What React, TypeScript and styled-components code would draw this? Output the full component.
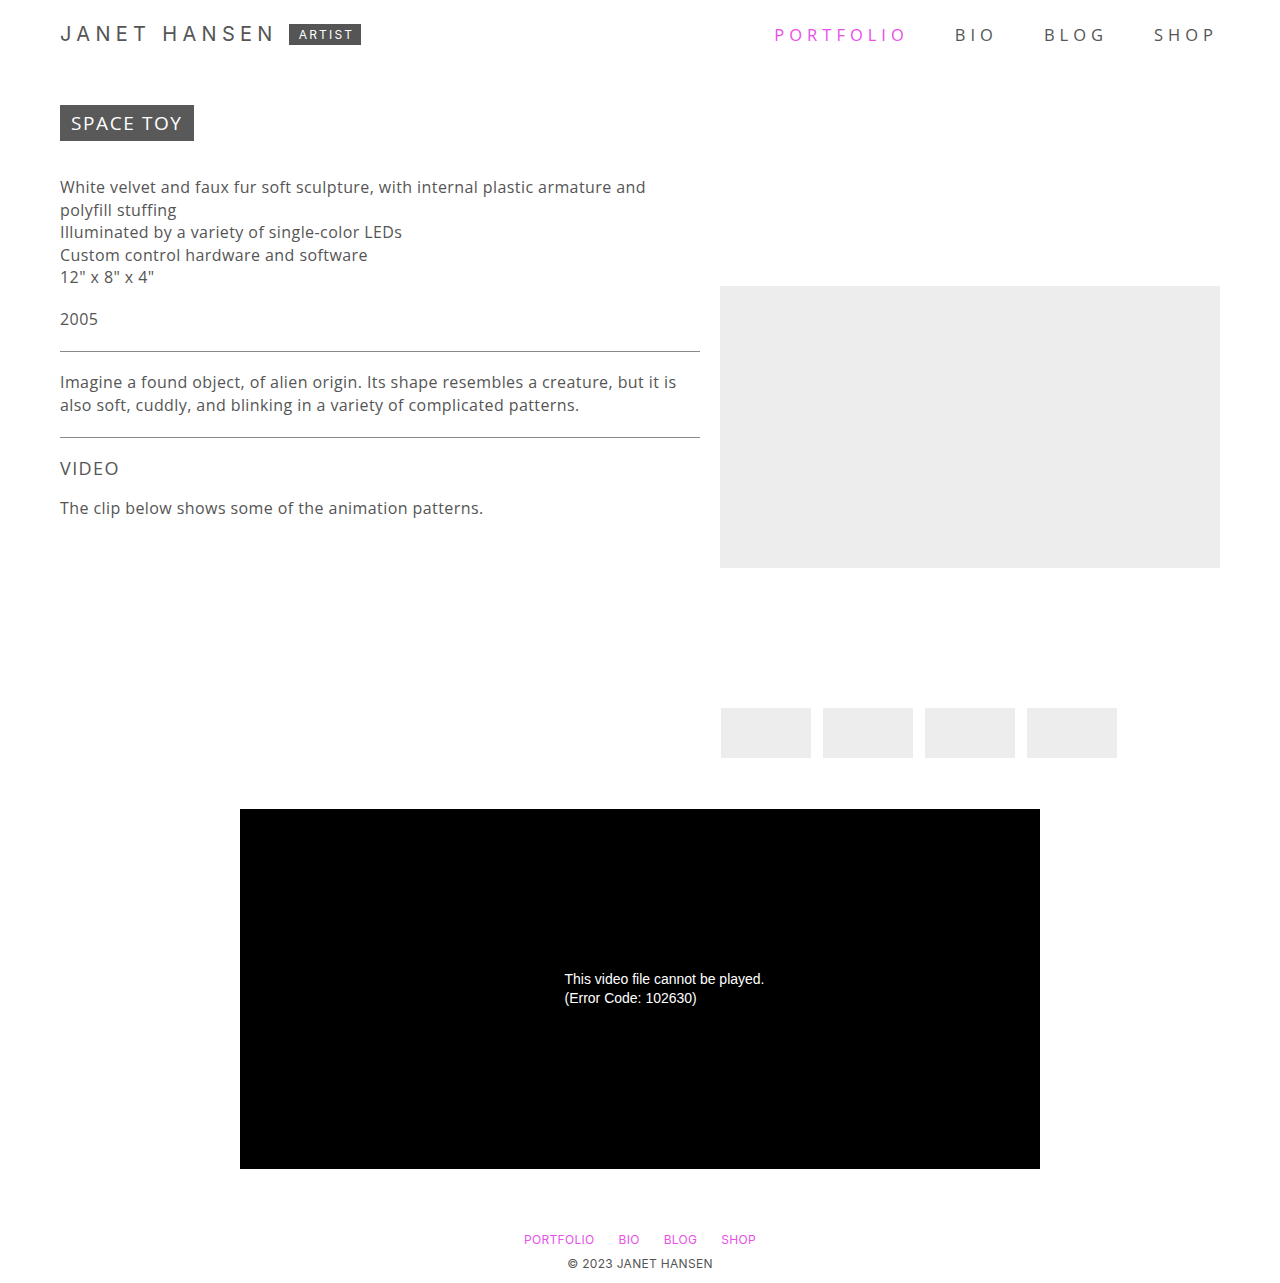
import React from "react";
import styled, { createGlobalStyle } from "styled-components";

const Global = createGlobalStyle`
  html, body { margin: 0; padding: 0; background: #fff; }
  body { font-family: "Open Sans", "Noto Sans", sans-serif; color: #555; }
  * { box-sizing: border-box; }
`;

const PINK = "#e94fe9";

const Page = styled.div`
  width: 1280px;
  padding: 0 60px;
`;

const Header = styled.header`
  display: flex;
  justify-content: space-between;
  align-items: center;
  height: 68px;
`;

const Brand = styled.div`
  display: flex;
  align-items: center;
  gap: 11px;
`;

const Name = styled.div`
  font-family: Inter, "Liberation Sans", sans-serif;
  font-size: 20px;
  letter-spacing: 5.3px;
  color: #555;
  font-weight: 400;
`;

const Badge = styled.span`
  font-family: Inter, "Liberation Sans", sans-serif;
  background: #555;
  color: #fff;
  font-size: 12px;
  letter-spacing: 2.2px;
  padding: 3px 7px 3px 10px;
  line-height: 15px;
`;

const Nav = styled.nav`
  display: flex;
  gap: 46px;
  margin-right: 2px;
`;

const NavLink = styled.a<{ $active?: boolean }>`
  font-size: 16.5px;
  letter-spacing: 5px;
  color: ${(p) => (p.$active ? PINK : "#555")};
  text-decoration: none;
  padding-top: 1px;
`;

const Main = styled.main`
  display: grid;
  grid-template-columns: 640px 500px;
  column-gap: 20px;
  padding-top: 37px;
`;

const Left = styled.div`
  display: flex;
  flex-direction: column;
`;

const Title = styled.h1`
  align-self: flex-start;
  margin: 0;
  background: #595959;
  color: #fff;
  font-weight: 400;
  font-size: 19px;
  letter-spacing: 1.6px;
  height: 36px;
  line-height: 36px;
  padding: 0 11px;
`;

const Text = styled.p<{ $mt?: number }>`
  margin: ${(p) => p.$mt ?? 0}px 0 0;
  font-size: 16px;
  letter-spacing: 0.42px;
  line-height: 22.5px;
  color: #555;
`;

const Rule = styled.hr<{ $mt: number }>`
  margin: ${(p) => p.$mt}px 0 0;
  border: 0;
  border-top: 1px solid #888;
`;

const SubHead = styled.h2`
  margin: 16px 0 0;
  font-weight: 400;
  font-size: 18px;
  letter-spacing: 1.4px;
  line-height: 28px;
  color: #555;
`;

const Right = styled.div`
  display: flex;
  flex-direction: column;
  padding-top: 181px;
`;

const MainImage = styled.div`
  width: 500px;
  height: 282px;
  background: #ededed;
`;

const Thumbs = styled.div`
  display: flex;
  gap: 12px;
  margin-top: 140px;
  padding-left: 1px;
`;

const Thumb = styled.div`
  width: 90px;
  height: 50px;
  background: #ededed;
`;

const VideoWrap = styled.div`
  display: flex;
  justify-content: center;
  margin-top: 51px;
`;

const Video = styled.div`
  width: 800px;
  height: 360px;
  background: #000;
  display: flex;
  align-items: center;
  justify-content: center;
`;

const VideoMsg = styled.div`
  font-family: "Liberation Sans", Arial, sans-serif;
  color: #fff;
  font-size: 14px;
  line-height: 19px;
  margin-left: 49px;
`;

const Footer = styled.footer`
  display: flex;
  flex-direction: column;
  align-items: center;
  padding-top: 62px;
  padding-bottom: 10px;
  font-family: Inter, "Liberation Sans", sans-serif;
`;

const FooterNav = styled.div`
  display: flex;
  gap: 24px;
`;

const FooterLink = styled.a`
  color: ${PINK};
  font-size: 12px;
  letter-spacing: 0.3px;
  text-decoration: none;
  line-height: 18px;
`;

const Copy = styled.div`
  margin-top: 6px;
  font-size: 12px;
  letter-spacing: 0.3px;
  color: #555;
  line-height: 18px;
`;

export default function App() {
  return (
    <>
      <Global />
      <Page>
        <Header>
          <Brand>
            <Name>JANET HANSEN</Name>
            <Badge>ARTIST</Badge>
          </Brand>
          <Nav>
            <NavLink $active>PORTFOLIO</NavLink>
            <NavLink>BIO</NavLink>
            <NavLink>BLOG</NavLink>
            <NavLink>SHOP</NavLink>
          </Nav>
        </Header>
        <Main>
          <Left>
            <Title>SPACE TOY</Title>
            <Text $mt={35}>
              White velvet and faux fur soft sculpture, with internal plastic armature and
              polyfill stuffing
              <br />
              Illuminated by a variety of single-color LEDs
              <br />
              Custom control hardware and software
              <br />
              12" x 8" x 4"
            </Text>
            <Text $mt={19}>2005</Text>
            <Rule $mt={21} />
            <Text $mt={19}>
              Imagine a found object, of alien origin. Its shape resembles a creature, but it is
              also soft, cuddly, and blinking in a variety of complicated patterns.
            </Text>
            <Rule $mt={21} />
            <SubHead>VIDEO</SubHead>
            <Text $mt={15}>The clip below shows some of the animation patterns.</Text>
          </Left>
          <Right>
            <MainImage />
            <Thumbs>
              <Thumb />
              <Thumb />
              <Thumb />
              <Thumb />
            </Thumbs>
          </Right>
        </Main>
        <VideoWrap>
          <Video>
            <VideoMsg>
              This video file cannot be played.
              <br />
              (Error Code: 102630)
            </VideoMsg>
          </Video>
        </VideoWrap>
        <Footer>
          <FooterNav>
            <FooterLink>PORTFOLIO</FooterLink>
            <FooterLink>BIO</FooterLink>
            <FooterLink>BLOG</FooterLink>
            <FooterLink>SHOP</FooterLink>
          </FooterNav>
          <Copy>© 2023 JANET HANSEN</Copy>
        </Footer>
      </Page>
    </>
  );
}
